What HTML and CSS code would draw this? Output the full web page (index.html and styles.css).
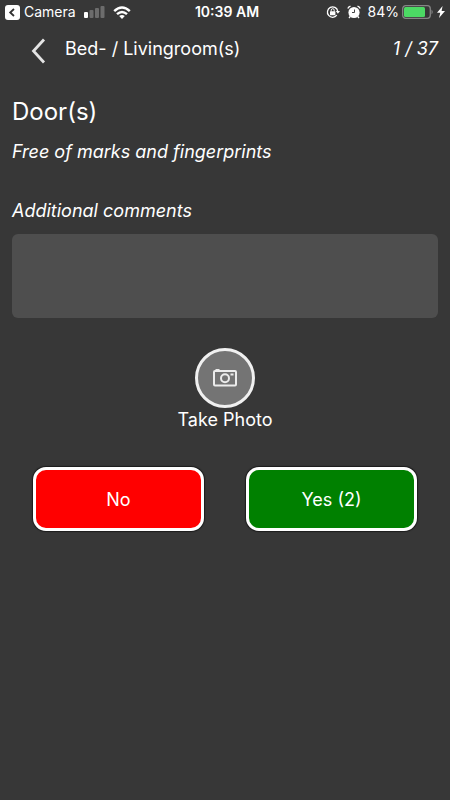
FILE: index.html
```html
<!DOCTYPE html>
<html lang="en">
<head>
    <meta charset="UTF-8">
    <meta name="viewport" content="width=device-width, initial-scale=1.0">
    <title>Bed- / Livingroom(s)</title>
    <link rel="stylesheet" href="styles.css">
</head>
<body>
    <div class="status-bar">
        <div class="status-left">
            <a class="back-app" href="#">
                <svg width="15" height="15" viewBox="0 0 15 15">
                    <rect width="15" height="15" rx="3" fill="#fff"/>
                    <path d="M9 4L5.200 7.500L9 11" fill="none" stroke="#333" stroke-width="1.800"/>
                </svg>
                <span>Camera</span>
            </a>
            <svg width="21" height="12" viewBox="0 0 21 12">
                <rect x="0" y="6" width="4" height="6" rx="1" fill="#fff"/>
                <rect x="5.500" y="4" width="4" height="8" rx="1" fill="#6c6c6c"/>
                <rect x="11" y="2" width="4" height="10" rx="1" fill="#6c6c6c"/>
                <rect x="16.500" y="0" width="4" height="12" rx="1" fill="#6c6c6c"/>
            </svg>
            <svg width="18" height="13" viewBox="0 0 18 13">
                <g fill="none" stroke="#fff" stroke-width="2.400">
                    <path d="M1.200 5.200Q9 -2.200 16.800 5.200"/>
                    <path d="M4 8.200Q9 3.600 14 8.200"/>
                </g>
                <path d="M6.200 10Q9 7.800 11.800 10L9 12.900Z" fill="#fff"/>
            </svg>
        </div>
        <div class="status-time">10:39 AM</div>
        <div class="status-right">
            <svg class="lock-icon" width="14" height="14" viewBox="0 0 14 14">
                <path d="M10.800 10.200A5.200 5.200 0 1 1 11.700 6" fill="none" stroke="#fff" stroke-width="1.300"/>
                <path d="M9.800 6H14L11.900 8.800Z" fill="#fff"/>
                <rect x="4" y="6.200" width="5.400" height="4" rx=".5" fill="#fff"/>
                <path d="M5.200 6.500V5.200a1.500 1.500 0 0 1 3 0V6.500" fill="none" stroke="#fff"/>
            </svg>
            <svg class="alarm-icon" width="14" height="14" viewBox="0 0 14 14">
                <circle cx="7" cy="7.500" r="5.600" fill="#fff"/>
                <path d="M7.500 4.500V7.500H5" fill="none" stroke="#444" stroke-width="1"/>
                <path d="M.8 3.600Q1.500 1.800 3.500 1.100M10.500 1.100Q12.500 1.800 13.200 3.600M3.200 11.500L2 13M10.800 11.500L12 13" fill="none" stroke="#fff" stroke-width="1.300"/>
            </svg>
            <span>84%</span>
            <svg width="32" height="14" viewBox="0 0 32 14">
                <rect x=".7" y=".7" width="27.600" height="12.600" rx="3" fill="none" stroke="#858585" stroke-width="1.300"/>
                <rect x="2" y="2" width="21" height="10" rx="1.500" fill="#4cd964"/>
                <path d="M29.500 4.500Q32 7 29.500 9.500Z" fill="#858585"/>
            </svg>
            <svg width="8" height="12" viewBox="0 0 8 12">
                <path d="M5.600 0L0 6.800H3.300L2 12L8 4.900H4.600Z" fill="#fff"/>
            </svg>
        </div>
    </div>

    <header class="header">
        <button class="back-btn" type="button" aria-label="Back">
            <svg width="16" height="26" viewBox="0 0 16 26">
                <path d="M14 1.500L3.500 13L14 24.500" fill="none" stroke="#e4e4e4" stroke-width="2.800"/>
            </svg>
        </button>
        <div class="room">Bed- / Livingroom(s)</div>
        <div class="progress">1 / 37</div>
    </header>

    <main class="content">
        <h1>Door(s)</h1>
        <p class="criteria">Free of marks and fingerprints</p>

        <label for="comments">Additional comments</label>
        <textarea id="comments"></textarea>

        <button class="photo-btn" type="button">
            <span class="photo-circle">
                <svg width="24" height="18" viewBox="0 0 24 18">
                    <g fill="none" stroke="#ececec" stroke-width="2">
                        <rect x="1" y="2" width="22" height="14.500" rx="1"/>
                        <circle cx="12" cy="9.300" r="4"/>
                        <path d="M2.500 1H6.500M17.500 5.500H20.500"/>
                    </g>
                </svg>
            </span>
            <span>Take Photo</span>
        </button>

        <div class="answers">
            <button class="answer no" type="button">No</button>
            <button class="answer yes" type="button">Yes (2)</button>
        </div>
    </main>
</body>
</html>
```
FILE: styles.css
```css
* {
    box-sizing: border-box;
}

body {
    margin: 0;
    min-height: 100vh;
    background-color: #373737;
    color: #fff;
    font-family: Inter, Roboto, sans-serif;
    font-size: 18px;
    line-height: 24px;
}

button {
    padding: 0;
    border: none;
    background: none;
    color: inherit;
    font: inherit;
    cursor: pointer;
}

svg {
    display: block;
    flex-shrink: 0;
}

.status-bar {
    display: grid;
    grid-template-columns: 1fr auto 1fr;
    align-items: center;
    height: 24px;
    padding: 0 5px;
    font-size: 14px;
}

.status-left,
.status-right,
.back-app {
    display: flex;
    align-items: center;
}

.status-left {
    gap: 8px;
}

.back-app {
    gap: 4px;
    color: #fff;
    text-decoration: none;
}

.status-time {
    padding-left: 4px;
    font-weight: 600;
}

.status-right {
    justify-content: flex-end;
    gap: 3px;
}

.lock-icon,
.alarm-icon {
    margin-right: 4px;
}

.header {
    display: flex;
    align-items: center;
    height: 48px;
    margin-top: 1px;
    padding: 0 12px;
}

.back-btn {
    margin: 3px 19px 0 18px;
}

.room {
    flex: 1;
}

.progress {
    font-style: italic;
}

.content {
    padding: 23px 12px;
}

h1 {
    margin: 0;
    font-size: 24px;
    font-weight: 400;
    line-height: 32px;
}

.criteria {
    margin: 12px 0 35px;
    font-style: italic;
}

label {
    display: block;
    margin-bottom: 11px;
    font-style: italic;
}

textarea {
    display: block;
    width: 100%;
    height: 84px;
    padding: 8px;
    border: none;
    border-radius: 6px;
    background-color: #4e4e4e;
    color: #fff;
    font: inherit;
    resize: none;
}

.photo-btn {
    display: flex;
    flex-direction: column;
    align-items: center;
    margin: 30px auto 0;
}

.photo-circle {
    display: flex;
    align-items: center;
    justify-content: center;
    width: 60px;
    height: 60px;
    border: 3px solid #f0f0f0;
    border-radius: 50%;
    background-color: #747474;
}

.answers {
    display: flex;
    gap: 42px;
    margin: 35px 21px 0;
}

.answer {
    flex: 1;
    height: 64px;
    padding-top: 2px;
    border: 3px solid #fff;
    border-radius: 13px;
    box-shadow: 0 0 1px 1px #1c1c1c;
}

.no {
    background-color: #f00;
}

.yes {
    background-color: #008000;
}
```
